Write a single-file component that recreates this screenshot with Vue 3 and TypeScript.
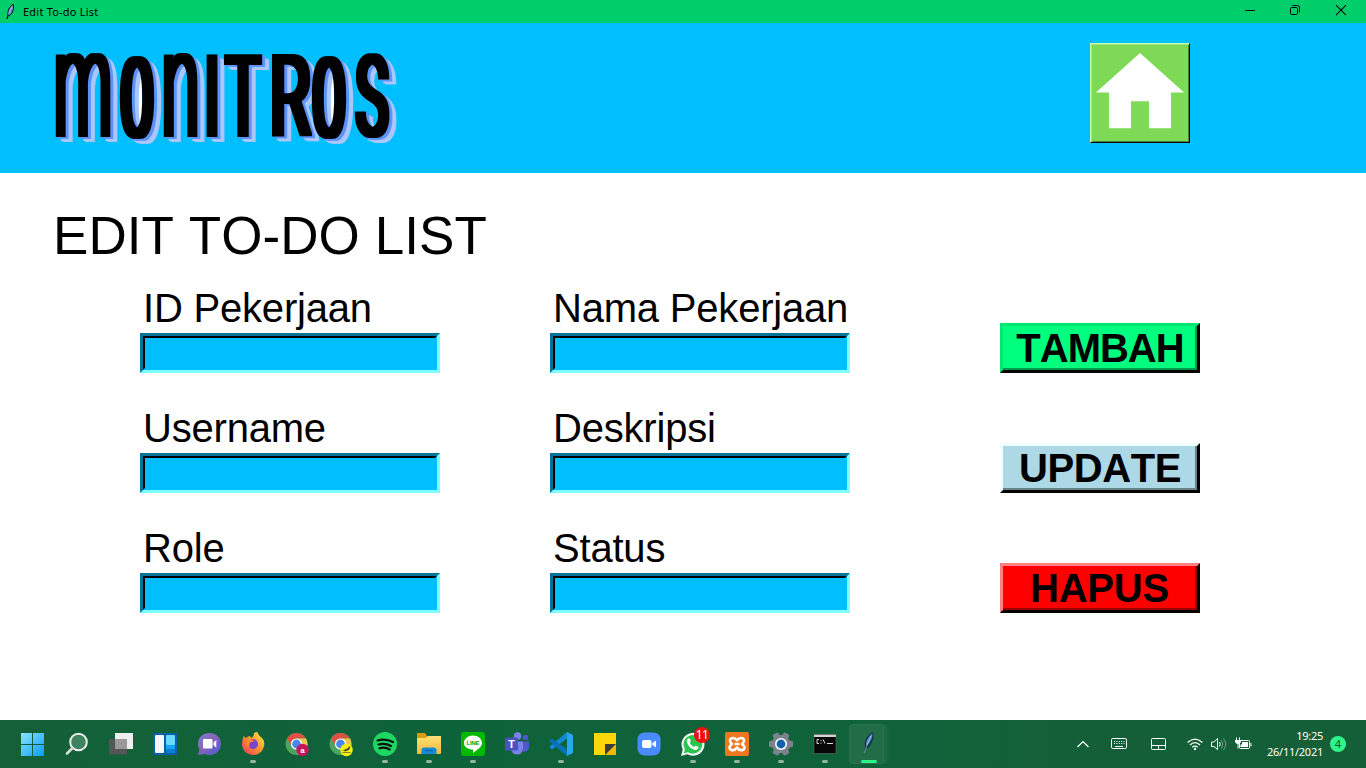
<script setup lang="ts">
interface Glyph { ch: string; x: number; w: number; size: number; face: string }
interface Action { label: string; kind: string }
interface TaskItem { name: string; running?: boolean; active?: boolean }

const logo: Glyph[] = [
  { ch: 'm', x: 83, w: 58, size: 153, face: 'plain light' },
  { ch: 'O', x: 137, w: 35, size: 107, face: 'mono' },
  { ch: 'n', x: 180.5, w: 38, size: 153, face: 'plain light' },
  { ch: 'I', x: 212, w: 14, size: 114, face: 'plain' },
  { ch: 'T', x: 243, w: 35, size: 114, face: 'plain' },
  { ch: 'R', x: 290, w: 41, size: 114, face: 'plain' },
  { ch: 'O', x: 329, w: 35, size: 107, face: 'mono' },
  { ch: 'S', x: 372, w: 33, size: 113, face: 'plain' },
]

const rows: { fields: string[]; action: Action }[] = [
  { fields: ['ID Pekerjaan', 'Nama Pekerjaan'], action: { label: 'TAMBAH', kind: 'add' } },
  { fields: ['Username', 'Deskripsi'], action: { label: 'UPDATE', kind: 'update' } },
  { fields: ['Role', 'Status'], action: { label: 'HAPUS', kind: 'remove' } },
]

const tasks: TaskItem[] = [
  { name: 'start' }, { name: 'search' }, { name: 'taskview' }, { name: 'widgets' }, { name: 'chat' },
  { name: 'firefox', running: true }, { name: 'chrome-a' }, { name: 'chrome-b' },
  { name: 'spotify', running: true }, { name: 'explorer', running: true }, { name: 'line', running: true },
  { name: 'teams' }, { name: 'vscode', running: true }, { name: 'notes' }, { name: 'zoom' },
  { name: 'whatsapp', running: true }, { name: 'xampp', running: true }, { name: 'settings', running: true },
  { name: 'terminal', running: true }, { name: 'feather', running: true, active: true },
]
</script>

<template>
  <div class="desktop">
    <div class="titlebar">
      <svg class="tk" viewBox="0 0 10 18" width="10" height="18">
        <path d="M2 16 L3 11 Q2 6 8 1 Q10 5 7 10 Q5 13 3 13Z" fill="#5a8fd0" stroke="#06150f" stroke-width="1" />
        <path d="M3.500 11 L7 4" stroke="#a8c8f0" stroke-width=".8" />
      </svg>
      <span class="title">Edit To-do List</span>
      <div class="winctl">
        <svg width="46" height="22" viewBox="0 0 46 22"><path d="M18 10.5H28" stroke="#000" /></svg>
        <svg width="45" height="22" viewBox="0 0 45 22" fill="none" stroke="#000">
          <rect x="17.5" y="7.5" width="7" height="7" rx="1.2" />
          <path d="M19.5 5.5H24.5Q26.5 5.500 26.500 7.500V12.500" />
        </svg>
        <svg width="46" height="22" viewBox="0 0 46 22"><path d="M18 5.200L28 15.200M28 5.200L18 15.200" stroke="#000" stroke-width="1.050" /></svg>
      </div>
    </div>

    <header class="banner">
      <svg class="logo" width="420" height="150" viewBox="0 23 420 150">
        <defs>
          <filter id="extrude" filterUnits="userSpaceOnUse" x="0" y="23" width="420" height="150" color-interpolation-filters="sRGB">
            <feMorphology in="SourceGraphic" operator="dilate" radius="3 1" result="face" />
            <feOffset in="face" dx="1" dy="1" result="a1" />
            <feOffset in="face" dx="3" dy="2" result="a2" />
            <feMerge result="near"><feMergeNode in="a1" /><feMergeNode in="a2" /></feMerge>
            <feOffset in="face" dx="5" dy="4" result="b1" />
            <feOffset in="face" dx="7" dy="5" result="b2" />
            <feMerge result="far"><feMergeNode in="b1" /><feMergeNode in="b2" /></feMerge>
            <feFlood flood-color="#5b93fa" /><feComposite in2="near" operator="in" result="nearC" />
            <feFlood flood-color="#abc6fb" /><feComposite in2="far" operator="in" result="farC" />
            <feMerge>
              <feMergeNode in="farC" /><feMergeNode in="nearC" /><feMergeNode in="face" />
            </feMerge>
          </filter>
        </defs>
        <g fill="#fff">
          <rect x="137" y="68" width="5" height="56" /><rect x="286" y="70" width="5" height="20" />
          <rect x="329" y="68" width="5" height="56" />
        </g>
        <g filter="url(#extrude)">
          <text v-for="(g, i) in logo" :key="i" :class="g.face" :x="g.x" y="136" :font-size="g.size" :textLength="g.w" lengthAdjust="spacingAndGlyphs" text-anchor="middle">{{ g.ch }}</text>
        </g>
      </svg>
      <button class="home" aria-label="Home">
        <svg width="96" height="96" viewBox="0 0 96 96">
          <path d="M48 8L92 47.500H79V83.300H57V56.300H39V83.300H17V47.500H4Z" fill="#fff" />
        </svg>
      </button>
    </header>

    <main class="content">
      <h1>EDIT TO-DO LIST</h1>
      <form class="form" @submit.prevent>
        <template v-for="row in rows" :key="row.action.label">
          <label v-for="f in row.fields" :key="f" class="field">
            <span class="caption">{{ f }}</span>
            <span class="entry"><input type="text" /></span>
          </label>
          <button type="button" class="action" :class="row.action.kind"><span>{{ row.action.label }}</span></button>
        </template>
      </form>
    </main>

    <footer class="taskbar">
      <div class="tasks">
        <div v-for="t in tasks" :key="t.name" class="task" :class="{ active: t.active, running: t.running }">
          <svg width="28" height="28" viewBox="-2 -2 28 28">
            <defs v-if="t.name === 'start'">
              <linearGradient id="win" x1="0" y1="0" x2="1" y2="1"><stop offset="0" stop-color="#8be4ff" /><stop offset="1" stop-color="#0a9cf5" /></linearGradient>
              <linearGradient id="chat" x1="0" y1="0" x2="1" y2="1"><stop offset="0" stop-color="#7f7fd8" /><stop offset=".45" stop-color="#8a62b8" /><stop offset="1" stop-color="#4a5bd8" /></linearGradient>
              <linearGradient id="fox" x1="1" y1="0" x2="0" y2="1"><stop offset="0" stop-color="#fff04a" /><stop offset=".45" stop-color="#ff9a2a" /><stop offset="1" stop-color="#f0306a" /></linearGradient>
              <linearGradient id="fold" x1="0" y1="0" x2="0" y2="1"><stop offset="0" stop-color="#ffdf76" /><stop offset="1" stop-color="#f5bb38" /></linearGradient>
            </defs>
            <g v-if="t.name === 'start'" fill="url(#win)">
              <path d="M0 1H23V24H0Z" /><path d="M11.500 1V24M0 12.500H23" stroke="#12603a" stroke-width="1" />
            </g>
            <g v-else-if="t.name === 'search'" fill="none">
              <circle cx="13.500" cy="10" r="8.300" fill="#3f8260" stroke="#eee" stroke-width="2" />
              <path d="M7.500 16L2 21.500" stroke="#dcdcdc" stroke-width="2.600" stroke-linecap="round" />
            </g>
            <g v-else-if="t.name === 'taskview'">
              <path d="M6 1H24V17H6Z" fill="#eee" /><path d="M0 7H18V22.500H0Z" fill="#555" />
              <path d="M6 7H18V17H6Z" fill="#999" />
            </g>
            <g v-else-if="t.name === 'widgets'">
              <rect y="1" width="24" height="22" rx="1" fill="#0860a8" /><rect x="2" y="3" width="9" height="18" rx="1" fill="#f6f6f6" />
              <rect x="13" y="3" width="9" height="10" rx="1" fill="#68d9ff" /><path d="M13 13H22V17H13Z" fill="#12a5f5" /><path d="M13 17H22V21H13Z" fill="#087ed4" />
            </g>
            <g v-else-if="t.name === 'chat'">
              <path d="M12.500 1C19 1 24 5.500 24 12S19 23 12.500 23Q10 23 8 22L1 23L2.500 17Q1 15 1 12C1 5.500 6 1 12.500 1Z" fill="url(#chat)" />
              <rect x="6" y="7" width="9.500" height="9.500" rx="1" fill="#fff" /><path d="M16.500 10.500L19.300 8V15.700L16.500 13Z" fill="#fff" />
            </g>
            <g v-else-if="t.name === 'firefox'">
              <path d="M2.500 4L5 6Q7 4 9 4L10 6Q13 5 13 1Q15 0 16 0Q18 4 21 6Q24 9 23 14Q21 23 12 23Q2 22 1 13Q1 8 2.500 4Z" fill="url(#fox)" />
              <circle cx="12" cy="12" r="5" fill="#7645c9" /><path d="M5 8Q10 6 14 9L10 10Q7 12 9 15Q4 14 5 8Z" fill="#ff872b" />
            </g>
            <g v-else-if="t.name === 'chrome-a' || t.name === 'chrome-b'">
              <circle cx="11.500" cy="12" r="11" fill="#4da45d" />
              <path d="M2 6.500A11 11 0 0 1 21 6.500H11.500L6.500 14Z" fill="#dc5144" />
              <path d="M11.500 6.500H21Q24 12 21 18L11.500 23L17 15Z" fill="#efc846" />
              <circle cx="11.500" cy="12" r="5.600" fill="#fff" /><circle cx="11.500" cy="12" r="4.400" fill="#4a87ee" />
              <circle cx="17.500" cy="18" r="6.200" :fill="t.name === 'chrome-a' ? '#c2185b' : '#f8f000'" />
              <text v-if="t.name === 'chrome-a'" x="17.500" y="20.600" font-size="7.500" text-anchor="middle" fill="#fff" class="mini">a</text>
              <path v-else d="M14.500 18.500L18 17L21 14.500L20 17.500L16.500 19Z M13.500 20.500H21.500" fill="#222" stroke="#555" stroke-width=".700" />
            </g>
            <g v-else-if="t.name === 'spotify'">
              <circle cx="12" cy="12" r="12" fill="#1ed760" />
              <path d="M4.500 8.500Q12 6 20 10M5.500 12.500Q12 10.500 18 14M6.500 16.300Q12 14.500 16.800 17.500" fill="none" stroke="#111" stroke-width="2.200" stroke-linecap="round" />
            </g>
            <g v-else-if="t.name === 'explorer'">
              <path d="M0 2Q0 1 1 1H8L10 4V9H0Z" fill="#d99b14" /><path d="M0 6H8L11 4H24V21Q24 22 23 22H1Q0 22 0 21Z" fill="url(#fold)" />
              <path d="M4.500 22V18Q4.500 15.500 7 15.500H17Q19.500 15.500 19.500 18V22Z" fill="#1688d8" /><path d="M8 18.500H16" stroke="#0c63a8" />
            </g>
            <g v-else-if="t.name === 'line'">
              <rect width="24" height="24" rx="3" fill="#00b900" />
              <path d="M12 3.500C17 3.500 21 6.800 21 11C21 15 16 18 12 21V17.500C7 17.500 3 15 3 11C3 6.800 7 3.500 12 3.500Z" fill="#fff" />
              <text x="12" y="13.100" font-size="6" textLength="13" text-anchor="middle" fill="#00a500" class="mini">LINE</text>
            </g>
            <g v-else-if="t.name === 'teams'">
              <circle cx="12.500" cy="4" r="3.800" fill="#7b83eb" /><circle cx="20.500" cy="5.500" r="2.700" fill="#5059c9" />
              <path d="M16 9.500H24V16Q23 20 18 20Z" fill="#5059c9" /><path d="M6 9.500H18V17Q17 22.500 12 22.500T6 17Z" fill="#7b83eb" />
              <rect y="5.500" width="13" height="13" rx="1" fill="#4b53bc" />
              <text x="6.500" y="15.700" font-size="10.500" text-anchor="middle" fill="#fff" class="mini">T</text>
            </g>
            <g v-else-if="t.name === 'vscode'">
              <path d="M18 0L24 3V21L18 24Z" fill="#29a6ee" /><path d="M18 0L0 15L3 17.500L18 6.500Z" fill="#1389d3" /><path d="M18 24L0 9L3 6.500L18 17.500Z" fill="#0872b9" />
            </g>
            <g v-else-if="t.name === 'notes'">
              <path d="M1 1H23V23H1Z" fill="#ffd60a" /><path d="M12 23V13L23 12V23Z" fill="#f0b800" /><path d="M12 12H23L12 23Z" fill="#3b3b3b" />
            </g>
            <g v-else-if="t.name === 'zoom'">
              <rect x=".500" y=".500" width="23" height="23" rx="7" fill="#4a8cff" />
              <rect x="5" y="8" width="9.500" height="8" rx="2" fill="#fff" /><path d="M15.500 11L19 8.500V15.500L15.500 13Z" fill="#fff" />
            </g>
            <g v-else-if="t.name === 'whatsapp'">
              <path d="M0 24L1.700 17.500A11.500 11.500 0 1 1 6.200 22.300Z" fill="#f5f5f5" />
              <path d="M2.800 21.200L4 17.200A9.300 9.300 0 1 1 7 20.200Z" fill="#28c64d" />
              <path d="M7 6.500Q9 5.500 9.800 9L8.700 10.800Q10 13.800 13 15L14.800 13.400L17.800 15.200Q17 18.500 14 18Q7 16 5.800 9.500Q6 7.300 7 6.500Z" fill="#fff" />
            </g>
            <g v-else-if="t.name === 'xampp'">
              <rect width="24" height="24" rx="2" fill="#f0771f" />
              <path d="M12 8.300Q9.500 5 6 6.500Q3.500 9 7 12Q3 15 5.500 17.500Q9.500 19.500 12 15.500Q14.500 19.500 18.500 17.500Q21 15 17 12Q20.500 9 18 6.500Q14.500 5 12 8.300ZM9.500 12H14.500" fill="none" stroke="#fff" stroke-width="2.600" stroke-linejoin="round" />
            </g>
            <g v-else-if="t.name === 'settings'">
              <g fill="#7b838b"><rect x="8.700" y="0" width="6.600" height="24" rx="1.500" transform="rotate(90 12 12)" /><rect x="8.700" y="0" width="6.600" height="24" rx="1.500" transform="rotate(30 12 12)" /><rect x="8.700" y="0" width="6.600" height="24" rx="1.500" transform="rotate(150 12 12)" /><circle cx="12" cy="12" r="9.300" /></g>
              <circle cx="12" cy="12" r="6" fill="#fff" /><circle cx="12" cy="12" r="4.400" fill="#1360b0" />
            </g>
            <g v-else-if="t.name === 'terminal'">
              <rect x="1" y="2.500" width="22" height="19" fill="#080808" /><path d="M1 2.500H23V5H1Z" fill="#d5d5d5" />
              <path d="M6 7.500H4V11.500H6M8 8V9M8 10.500V11.500M10 7.500L12 11.500M14 11.500H20" stroke="#ddd" fill="none" stroke-width="1" /><path d="M1 2.500H23V21.500H1Z" fill="none" stroke="#777" stroke-width=".500" />
            </g>
            <g v-else>
              <path d="M7.500 22.500L9 15Q7 7 16.500 0Q19 5 15 12Q13 16 10 16.500Z" fill="#15304c" />
              <path d="M10 14Q9.500 7 16.300 1.500Q17 6 12.500 12Z" fill="#5a95d0" /><path d="M8 21L15 4" stroke="#b8d0e8" stroke-width=".600" />
            </g>
          </svg>
          <span v-if="t.name === 'whatsapp'" class="count">11</span>
        </div>
      </div>

      <div class="tray">
        <svg width="12" height="14" viewBox="0 0 12 14"><path d="M.500 10L6 4.500L11.500 10" fill="none" stroke="#fff" stroke-width="1.200" /></svg>
        <svg class="kbd" width="16" height="14" viewBox="0 0 16 14" fill="none" stroke="#fff">
          <rect x=".500" y="1.500" width="15" height="10" rx="1.200" /><path d="M3 4.500H13.500M3 6.500H13.500" stroke-dasharray="1 1.400" /><path d="M4 9.500H12" />
        </svg>
        <svg class="pad" width="16" height="14" viewBox="0 0 16 14" fill="none" stroke="#fff">
          <rect x=".500" y="1.500" width="14" height="11" rx="1" /><path d="M1 8.500H15M7.500 8.500V12.500" />
        </svg>
        <svg class="wifi" width="16" height="14" viewBox="0 0 16 14" fill="none" stroke="#fff" stroke-width="1.300">
          <path d="M.600 5.500Q8 -1.200 15.400 5.500M3 8Q8 3.300 13 8M5.300 10.300Q8 7.900 10.700 10.300" /><circle cx="8" cy="12" r="1.200" fill="#fff" stroke="none" />
        </svg>
        <svg class="vol" width="16" height="14" viewBox="0 0 16 14" fill="none" stroke="#fff">
          <path d="M.500 5H3L6.500 1.500V12.500L3 9.500H.500Z" stroke-linejoin="round" /><path d="M8.500 5Q10 7 8.500 9.500" /><path d="M10.500 3Q13 7 10.500 11.500M12.500 1.500Q17 7 12.500 13" opacity=".4" />
        </svg>
        <svg class="bat" width="18" height="14" viewBox="0 0 18 14" fill="none" stroke="#fff">
          <rect x="4.500" y="3.500" width="10" height="8" rx="1" /><path d="M7 5H13V10H5.500V7.500H7Z" fill="#fff" stroke="none" /><path d="M16 6V9.500" />
          <path d="M1.500 .500V3M4.500 .500V3M3 6V11.500" /><path d="M0 3H6V5Q5 7 3 7T0 5Z" fill="#fff" stroke="none" />
        </svg>
        <div class="clock"><span>19:25</span><span>26/11/2021</span></div>
        <span class="bubble">4</span>
      </div>
    </footer>
  </div>
</template>

<style>
body { margin: 0; overflow: hidden; }
</style>

<style scoped>
.desktop { width: 1366px; height: 768px; display: flex; flex-direction: column; background: #fff; color: #000; font-family: "Liberation Sans", Arial, sans-serif; overflow: hidden; }
.desktop * { box-sizing: border-box; }
svg { display: block; flex: none; }
.titlebar { height: 23px; flex: none; background: #00ce6b; display: flex; align-items: center; padding-left: 5px; }
.title { margin-left: 8px; font: 11px/22px "Noto Sans", sans-serif; letter-spacing: 0.22px; }
.winctl { display: flex; margin-left: auto; height: 23px; margin-right: 2px; }
.banner { height: 150px; flex: none; background: #00bfff; display: flex; justify-content: space-between; padding-right: 176px; }
.plain { font-family: Roboto, sans-serif; font-weight: 400; }
.light { font-weight: 300; }
.mono { font-family: "DejaVu Sans Mono", monospace; font-weight: 400; }
.home { width: 100px; height: 100px; margin-top: 20px; padding: 0; background: #7ed957; border: 1px solid; border-color: #c5ffaa #000 #000 #c5ffaa; box-shadow: inset 1px 1px #a2e786, inset -1px -1px #4c8234; display: flex; align-items: center; justify-content: center; }
.content { flex: 1; padding: 33px 0 0 50px; font-kerning: none; }
h1 { margin: 0; padding-left: 3px; font-weight: 400; font-size: 53px; line-height: 60px; letter-spacing: 0.07px; }
.form { margin: 19px 0 0 90px; display: grid; grid-template-columns: 300px 300px 200px; column-gap: 110px; row-gap: 32px; }
.field { display: flex; flex-direction: column; height: 88px; }
.caption { font-size: 40px; line-height: 46px; height: 48px; padding-left: 3px; white-space: nowrap; letter-spacing: -0.2px; }
.entry { display: flex; height: 40px; border: 3px solid; border-color: #007399 #80ffff #80ffff #007399; }
.entry input { flex: 1; min-width: 0; padding: 0; background: #00bfff; border: 2px solid; border-color: #000 #00bfff #00bfff #000; border-radius: 0; outline: none; }
.action { align-self: end; margin-left: 40px; width: 200px; height: 50px; padding: 0; border: 3px solid #000; display: flex; color: #000; font: bold 40px/40px "Liberation Sans", Arial, sans-serif; font-kerning: none; }
.action span { flex: 1; height: 44px; line-height: 45px; border: 2px solid; border-top-width: 0; border-left-width: 0; padding-left: 2px; }
.add { background: #00ff7f; border-color: #00e673 #000 #000 #00e673; letter-spacing: -1px; }
.add span { border-color: #00994c; }
.update { background: #add8e6; border-color: #f0ffff #000 #000 #f0ffff; letter-spacing: -0.4px; }
.update span { border-color: #68828a; }
.remove { background: #f00; border-color: #ff8080 #000 #000 #ff8080; letter-spacing: -0.2px; }
.remove span { border-color: #900; padding-left: 1px; }
.taskbar { height: 48px; flex: none; background: linear-gradient(90deg, #146038 0, #0e623a 30%, #10623a 65%, #145f38 80%); display: flex; justify-content: space-between; }
.tasks { display: flex; padding-left: 11px; }
.task { width: 44px; height: 48px; position: relative; display: flex; align-items: center; justify-content: center; }
.task svg { position: relative; }
.task.running::after { content: ""; position: absolute; left: 19px; top: 40px; width: 6px; height: 3px; border-radius: 2px; background: #93b7a2; }
.task.active::before { content: ""; position: absolute; left: 2px; top: 4px; width: 35px; height: 40px; border-radius: 4px; background: #ffffff12; box-shadow: inset 0 0 0 1px #ffffff0c, 3px 0 0 #ffffff09, 5px 0 0 #ffffff05; }
.task.active svg { left: -1px; }
.task.active::after { left: 14px; width: 16px; background: #2cf58c; }
.mini { font-family: "Liberation Sans", Arial, sans-serif; font-weight: 700; }
.count { position: absolute; left: 23px; top: 7px; width: 16px; height: 16px; border-radius: 50%; background: #f00f0f; color: #fff; font: 12px/16px "Noto Sans", sans-serif; text-align: center; letter-spacing: -0.5px; }
.tray { display: flex; align-items: center; padding-right: 20px; }
.kbd { margin-left: 22px; }
.pad { margin-left: 24px; }
.wifi { margin-left: 20px; }
.vol { margin-left: 8px; }
.bat { margin-left: 8px; }
.clock { width: 70px; display: flex; flex-direction: column; text-align: right; color: #fff; font: 11px/16px "Noto Sans", sans-serif; letter-spacing: -0.25px; }
.bubble { width: 16px; height: 16px; margin-left: 7px; border-radius: 50%; background: #2cf58c; color: #053; font: 11px/16px "Noto Sans", sans-serif; text-align: center; }
</style>
